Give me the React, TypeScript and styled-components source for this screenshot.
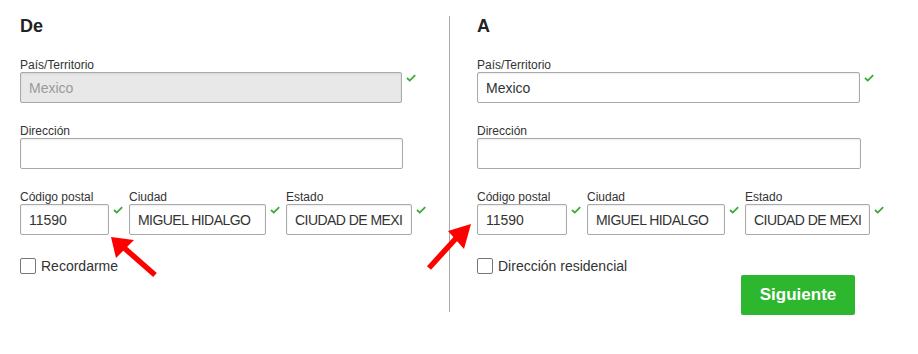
import React from "react";
import styled, { createGlobalStyle } from "styled-components";

const Global = createGlobalStyle`
  html, body { margin: 0; padding: 0; background: #fff; }
  body { font-family: "Liberation Sans", Arial, sans-serif; color: #333; }
  * { box-sizing: border-box; }
`;

const Page = styled.div`
  position: relative;
  width: 918px;
  height: 354px;
  display: flex;
  align-items: stretch;
  padding: 16px 0 0 20px;
`;

const Column = styled.div<{ $width: number; $ml?: number }>`
  width: ${(p) => p.$width}px;
  margin-left: ${(p) => p.$ml ?? 0}px;
  display: flex;
  flex-direction: column;
  align-self: flex-start;
`;

const Divider = styled.div`
  width: 1px;
  background: #a9a9a9;
  margin: 0 0 0 20px;
  height: 296px;
`;

const Heading = styled.h2`
  margin: 0 0 21px 0;
  font-size: 18px;
  line-height: 20px;
  font-weight: bold;
  color: #222;
`;

const Field = styled.div<{ $mb?: number }>`
  display: flex;
  flex-direction: column;
  margin-bottom: ${(p) => p.$mb ?? 20}px;
`;

const Label = styled.label`
  font-size: 12px;
  line-height: 15px;
  height: 15px;
  color: #333;
  white-space: nowrap;
  padding-top: 1px;
`;

const InputRow = styled.div`
  display: flex;
  align-items: flex-start;
`;

const Input = styled.input<{ $width: number; $tight?: boolean }>`
  width: ${(p) => p.$width}px;
  height: 31px;
  border: 1px solid #a9a9a9;
  border-radius: 2px;
  padding: 0 8px;
  font-family: "Liberation Sans", Arial, sans-serif;
  font-size: 14px;
  letter-spacing: ${(p) => (p.$tight ? "-0.55px" : "0")};
  color: #333;
  background: #fff;
  box-shadow: inset 0 1px 2px rgba(0, 0, 0, 0.08);
  outline: none;
  &:disabled {
    background: #e8e8e8;
    color: #9a9a9a;
    -webkit-text-fill-color: #9a9a9a;
    opacity: 1;
  }
`;

const CheckWrap = styled.span`
  display: inline-flex;
  width: 10px;
  height: 8px;
  margin: 2px 0 0 4px;
`;

const SplitRow = styled.div`
  display: flex;
  gap: 6px;
  margin-bottom: 23px;
`;

const CheckboxRow = styled.label`
  display: flex;
  align-items: flex-start;
  height: 17px;
  gap: 5px;
  font-size: 14px;
  color: #333;
`;

const Box = styled.span`
  width: 16px;
  height: 16px;
  border: 1px solid #767676;
  border-radius: 2px;
  background: #fff;
  flex: none;
`;

const BoxText = styled.span`
  line-height: 16px;
`;

const ButtonRow = styled.div`
  display: flex;
  justify-content: flex-end;
  padding-right: 32px;
`;

const Button = styled.button`
  width: 114px;
  height: 40px;
  border: none;
  border-radius: 2px;
  background: #2db72f;
  color: #fff;
  font-family: "Liberation Sans", Arial, sans-serif;
  font-weight: bold;
  font-size: 17px;
  cursor: pointer;
`;

const Overlay = styled.svg`
  position: absolute;
  left: 0;
  top: 0;
  pointer-events: none;
`;

const Check = () => (
  <CheckWrap>
    <svg width="10" height="8" viewBox="0 0 10 8">
      <polyline points="1,4 3.8,6.6 9.2,1.2" fill="none" stroke="#3aaa35" strokeWidth="1.8" />
    </svg>
  </CheckWrap>
);

type Part = { label: string; value: string; width: number; tight?: boolean };

const Split = ({ parts }: { parts: Part[] }) => (
  <SplitRow>
    {parts.map((p) => (
      <Field key={p.label} $mb={0}>
        <Label>{p.label}</Label>
        <InputRow>
          <Input $width={p.width} $tight={p.tight} value={p.value} readOnly />
          <Check />
        </InputRow>
      </Field>
    ))}
  </SplitRow>
);

export default function App() {
  return (
    <>
      <Global />
      <Page>
        <Column $width={409}>
          <Heading>De</Heading>
          <Field>
            <Label>País/Territorio</Label>
            <InputRow>
              <Input $width={382} value="Mexico" disabled readOnly />
              <Check />
            </InputRow>
          </Field>
          <Field>
            <Label>Dirección</Label>
            <InputRow>
              <Input $width={383} value="" readOnly />
            </InputRow>
          </Field>
          <Split
            parts={[
              { label: "Código postal", value: "11590", width: 89 },
              { label: "Ciudad", value: "MIGUEL HIDALGO", width: 137, tight: true },
              { label: "Estado", value: "CIUDAD DE MEXICO", width: 126, tight: true },
            ]}
          />
          <CheckboxRow>
            <Box />
            <BoxText>Recordarme</BoxText>
          </CheckboxRow>
        </Column>
        <Divider />
        <Column $width={410} $ml={27}>
          <Heading>A</Heading>
          <Field>
            <Label>País/Territorio</Label>
            <InputRow>
              <Input $width={383} value="Mexico" readOnly />
              <Check />
            </InputRow>
          </Field>
          <Field>
            <Label>Dirección</Label>
            <InputRow>
              <Input $width={384} value="" readOnly />
            </InputRow>
          </Field>
          <Split
            parts={[
              { label: "Código postal", value: "11590", width: 90 },
              { label: "Ciudad", value: "MIGUEL HIDALGO", width: 138, tight: true },
              { label: "Estado", value: "CIUDAD DE MEXICO", width: 125, tight: true },
            ]}
          />
          <CheckboxRow>
            <Box />
            <BoxText>Dirección residencial</BoxText>
          </CheckboxRow>
          <ButtonRow>
            <Button>Siguiente</Button>
          </ButtonRow>
        </Column>
        <Overlay width="918" height="354" viewBox="0 0 918 354">
          <line x1="155" y1="275" x2="122" y2="246" stroke="#ff0000" strokeWidth="5.5" />
          <polygon points="111,237 134,240 116,258" fill="#ff0000" />
          <line x1="429" y1="268" x2="459" y2="235" stroke="#ff0000" strokeWidth="5.5" />
          <polygon points="471,224 448,231 464,249" fill="#ff0000" />
        </Overlay>
      </Page>
    </>
  );
}
